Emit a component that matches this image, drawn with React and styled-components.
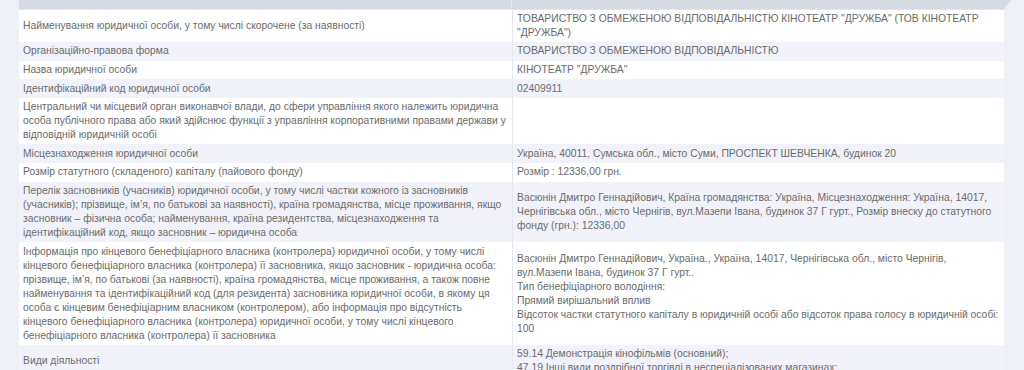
import styled, { createGlobalStyle } from 'styled-components';

const Global = createGlobalStyle`
body {
  margin: 0;
  background: #eef0f5;
  font-family: 'Liberation Sans', Arial, sans-serif;
}
`

const Page = styled.div`
padding: 0 20px 0 19px;
`

const HeadBar = styled.div`
display: grid;
grid-template-columns: 493px 1fr;
height: 9.5px;
width: 992px;
background: #d6dbe3;
clip-path: polygon(0 0, 100% 0, calc(100% - 7px) 100%, 0 100%);
`

const HeadCell = styled.div`
border-right: ${p => (p.$split ? '1px solid #e3e6ec' : 'none')};
`

const Table = styled.table`
width: 985px;
border-collapse: collapse;
table-layout: fixed;
font-size: 10.35px;
line-height: 14px;
color: #6b6b6b;
`

const Row = styled.tr`
background: ${p => (p.$alt ? '#f2f3fa' : '#fff')};
`

const Label = styled.td`
width: 485px;
padding: 2.3px 4px;
vertical-align: middle;
border-right: 1px solid #e6e8ef;
`

const Value = styled.td`
padding: 2.3px 4px;
vertical-align: middle;
`

const rows = [
  {
    label: 'Найменування юридичної особи, у тому числі скорочене (за наявності)',
    value: ['ТОВАРИСТВО З ОБМЕЖЕНОЮ ВІДПОВІДАЛЬНІСТЮ КІНОТЕАТР "ДРУЖБА" (ТОВ КІНОТЕАТР "ДРУЖБА")'],
  },
  { label: 'Організаційно-правова форма', value: ['ТОВАРИСТВО З ОБМЕЖЕНОЮ ВІДПОВІДАЛЬНІСТЮ'] },
  { label: 'Назва юридичної особи', value: ['КІНОТЕАТР "ДРУЖБА"'] },
  { label: 'Ідентифікаційний код юридичної особи', value: ['02409911'] },
  {
    label:
      'Центральний чи місцевий орган виконавчої влади, до сфери управління якого належить юридична особа публічного права або який здійснює функції з управління корпоративними правами держави у відповідній юридичній особі',
    value: [],
  },
  {
    label: 'Місцезнаходження юридичної особи',
    value: ['Україна, 40011, Сумська обл., місто Суми, ПРОСПЕКТ ШЕВЧЕНКА, будинок 20'],
  },
  { label: 'Розмір статутного (складеного) капіталу (пайового фонду)', value: ['Розмір : 12336,00 грн.'] },
  {
    label:
      'Перелік засновників (учасників) юридичної особи, у тому числі частки кожного із засновників (учасників); прізвище, ім’я, по батькові за наявності), країна громадянства, місце проживання, якщо засновник – фізична особа; найменування, країна резидентства, місцезнаходження та ідентифікаційний код, якщо засновник – юридична особа',
    value: [
      'Васюнін Дмитро Геннадійович, Країна громадянства: Україна, Місцезнаходження: Україна, 14017, Чернігівська обл., місто Чернігів, вул.Мазепи Івана, будинок 37 Г гурт., Розмір внеску до статутного фонду (грн.): 12336,00',
    ],
  },
  {
    label:
      'Інформація про кінцевого бенефіціарного власника (контролера) юридичної особи, у тому числі кінцевого бенефіціарного власника (контролера) її засновника, якщо засновник - юридична особа: прізвище, ім’я, по батькові (за наявності), країна громадянства, місце проживання, а також повне найменування та ідентифікаційний код (для резидента) засновника юридичної особи, в якому ця особа є кінцевим бенефіціарним власником (контролером), або інформація про відсутність кінцевого бенефіціарного власника (контролера) юридичної особи, у тому числі кінцевого бенефіціарного власника (контролера) її засновника',
    value: [
      'Васюнін Дмитро Геннадійович, Україна., Україна, 14017, Чернігівська обл., місто Чернігів, вул.Мазепи Івана, будинок 37 Г гурт..',
      'Тип бенефіціарного володіння:',
      'Прямий вирішальний вплив',
      'Відсоток частки статутного капіталу в юридичній особі або відсоток права голосу в юридичній особі: 100',
    ],
  },
  {
    label: 'Види діяльності',
    value: [
      '59.14 Демонстрація кінофільмів (основний);',
      '47.19 Інші види роздрібної торгівлі в неспеціалізованих магазинах;',
    ],
  },
];

export default function App() {
  return (
    <>
      <Global />
      <Page>
        <HeadBar>
          <HeadCell $split />
          <HeadCell />
        </HeadBar>
        <Table>
          <tbody>
            {rows.map((r, i) => (
              <Row key={i} $alt={i % 2 === 1}>
                <Label>{r.label}</Label>
                <Value>
                  {r.value.map((line, j) => (
                    <div key={j}>{line}</div>
                  ))}
                </Value>
              </Row>
            ))}
          </tbody>
        </Table>
      </Page>
    </>
  );
}
